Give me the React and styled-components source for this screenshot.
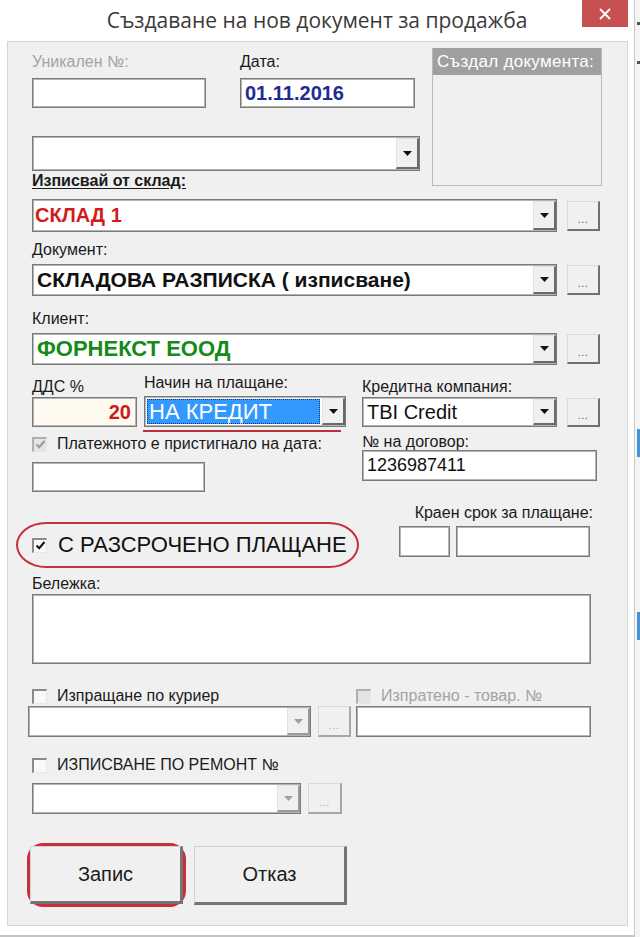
import React from 'react'
import styled, { createGlobalStyle } from 'styled-components'

const GlobalStyle = createGlobalStyle`
  html, body {
    margin: 0;
    padding: 0;
    background: #fff;
  }
  body {
    font-family: "Liberation Sans", Arial, sans-serif;
    color: #1a1a1a;
  }
  * {
    box-sizing: border-box;
  }
`

const Screen = styled.div`
  display: flex;
  width: 640px;
  height: 937px;
  overflow: hidden;
  background: #fff;
`

const Window = styled.div`
  flex: none;
  width: 635px;
  height: 937px;
  display: flex;
  flex-direction: column;
  background: #fff;
  border-right: 1px solid #c9c9c9;
  border-bottom: 2px solid #c4c4c4;
`

const OtherWindow = styled.div`
  flex: 1;
  display: flex;
  flex-direction: column;
  background: #f4f4f4;
`

const OtherMark = styled.div`
  margin-top: ${p => p.$mt}px;
  margin-left: 2px;
  width: 3px;
  height: ${p => p.$h}px;
  background: ${p => p.$color};
`

const TitleBar = styled.div`
  flex: none;
  height: 41px;
  display: grid;
  grid-template-columns: 52px 1fr 52px;
  align-items: start;
`

const Title = styled.div`
  grid-column: 2;
  padding-top: 7px;
  text-align: center;
  font-family: "Open Sans", "Noto Sans", sans-serif;
  font-size: 21px;
  line-height: 26px;
  color: #3a3a3a;
`

const CloseButton = styled.div`
  grid-column: 3;
  width: 46px;
  height: 27px;
  display: flex;
  align-items: center;
  justify-content: center;
  background: #c75050;
`

const Body = styled.div`
  padding-left: 7px;
`

const Panel = styled.div`
  width: 621px;
  height: 885px;
  padding: 6px 0 0 24px;
  background: #f0f0f0;
  border: 1px solid #d6d6d6;
  display: flex;
  flex-direction: column;
`

const Row = styled.div`
  display: flex;
  align-items: ${p => p.$align || 'center'};
  gap: ${p => p.$gap || 0}px;
  margin-top: ${p => p.$mt || 0}px;
  margin-left: ${p => p.$ml || 0}px;
`

const Column = styled.div`
  display: flex;
  flex-direction: column;
  flex: none;
  width: ${p => (p.$w ? `${p.$w}px` : 'auto')};
  margin-top: ${p => p.$mt || 0}px;
  margin-left: ${p => p.$ml || 0}px;
`

const Label = styled.div`
  margin-top: ${p => p.$mt || 0}px;
  font-size: 16px;
  line-height: ${p => p.$lh || 18}px;
  height: ${p => p.$lh || 18}px;
  white-space: nowrap;
  color: ${p => (p.$muted ? '#a3a3a3' : '#1a1a1a')};
  font-weight: ${p => (p.$bold ? 700 : 400)};
  text-decoration: ${p => (p.$underline ? 'underline' : 'none')};
  text-underline-offset: 2px;
  text-align: ${p => p.$align || 'left'};
`

const TextBox = styled.div`
  flex: none;
  width: ${p => p.$w}px;
  height: ${p => p.$h || 30}px;
  margin-top: ${p => p.$mt || 0}px;
  display: flex;
  align-items: center;
  justify-content: ${p => (p.$right ? 'flex-end' : 'flex-start')};
  padding: 0 5px 0 4px;
  background: ${p => p.$bg || '#fff'};
  border: 1px solid #7a7a7a;
  box-shadow: inset 0 0 0 1px #b4b4b4;
  font-size: ${p => p.$size || 20}px;
  white-space: nowrap;
  color: ${p => p.$color || '#111'};
  font-weight: ${p => (p.$bold ? 700 : 400)};
`

const Combo = styled.div`
  flex: none;
  width: ${p => p.$w}px;
  height: ${p => p.$h || 31}px;
  margin-top: ${p => p.$mt || 0}px;
  margin-left: ${p => p.$ml || 0}px;
  display: flex;
  align-items: stretch;
  background: #fff;
  border: 1px solid #7a7a7a;
  box-shadow: inset 0 0 0 1px #b4b4b4;
  padding: 1px 0 1px 1px;
`

const ComboText = styled.div`
  flex: 1;
  display: flex;
  align-items: center;
  padding-left: ${p => p.$pl ?? 3}px;
  font-size: ${p => p.$size || 20}px;
  white-space: nowrap;
  overflow: hidden;
  color: ${p => p.$color || '#111'};
  font-weight: ${p => (p.$bold ? 700 : 400)};
`

const Selection = styled.div`
  flex: 1;
  margin: 1px 2px 1px 1px;
  display: flex;
  align-items: center;
  padding-left: 2px;
  background: #3399ff;
  outline: 1px dotted #0c3c78;
  outline-offset: -1px;
  font-size: 22px;
  color: #fff;
  white-space: nowrap;
`

const ArrowButton = styled.div`
  flex: none;
  width: 23px;
  display: flex;
  align-items: center;
  justify-content: center;
  background: #f0f0f0;
  border-left: 1px solid #e2e2e2;
  border-top: 1px solid #e2e2e2;
  border-right: 2px solid ${p => (p.$disabled ? '#9a9a9a' : '#6a6a6a')};
  border-bottom: 2px solid ${p => (p.$disabled ? '#9a9a9a' : '#6a6a6a')};
`

const Dots = styled.div`
  flex: none;
  width: ${p => p.$w || 33}px;
  height: ${p => p.$h || 30}px;
  display: flex;
  align-items: flex-end;
  justify-content: center;
  padding-bottom: 6px;
  background: #f0f0f0;
  border-top: 1px solid #d8d8d8;
  border-left: 1px solid #d8d8d8;
  border-right: 2px solid ${p => (p.$disabled ? '#a6a6a6' : '#707070')};
  border-bottom: 2px solid ${p => (p.$disabled ? '#a6a6a6' : '#707070')};
  font-size: 11px;
  line-height: 8px;
  letter-spacing: 0.5px;
  color: ${p => (p.$disabled ? '#b0b0b0' : '#555')};
`

const InfoBox = styled.div`
  flex: none;
  width: 170px;
  height: 138px;
  margin-left: 12px;
  border: 1px solid #b9b9b9;
  border-top: none;
  background: #f0f0f0;
`

const InfoHeader = styled.div`
  height: 27px;
  padding-left: 4px;
  background: #a0a0a0;
  color: #fff;
  font-size: 17px;
  letter-spacing: 0.3px;
  line-height: 27px;
  white-space: nowrap;
`

const RedLine = styled.div`
  width: 198px;
  height: 2px;
  margin-top: 3px;
  margin-left: -1px;
  background: #b8323a;
`

const CheckRow = styled.div`
  display: flex;
  align-items: center;
  gap: ${p => p.$gap || 10}px;
  width: ${p => (p.$w ? `${p.$w}px` : 'auto')};
  height: 18px;
  margin-top: ${p => p.$mt || 0}px;
  font-size: ${p => p.$size || 16}px;
  white-space: nowrap;
  color: ${p => (p.$muted ? '#a3a3a3' : '#1a1a1a')};
`

const Box = styled.span`
  flex: none;
  width: 15px;
  height: 15px;
  display: inline-flex;
  align-items: center;
  justify-content: center;
  background: ${p => (p.$disabled ? '#e4e4e4' : '#f9f9f9')};
  border-top: 2px solid ${p => (p.$disabled ? '#b0b0b0' : '#8a8a8a')};
  border-left: 2px solid ${p => (p.$disabled ? '#b0b0b0' : '#8a8a8a')};
  border-right: 1px solid #e6e6e6;
  border-bottom: 1px solid #e6e6e6;
`

const Highlight = styled.div`
  flex: none;
  display: flex;
  align-items: center;
  width: ${p => p.$w}px;
  height: ${p => p.$h}px;
  margin-top: ${p => p.$mt || 0}px;
  margin-left: ${p => p.$ml || 0}px;
  padding-left: ${p => p.$pl || 0}px;
  border: ${p => p.$bw || 2}px solid #c5303b;
  border-radius: ${p => p.$radius};
`

const BigText = styled.span`
  margin-left: 11px;
  font-size: 22px;
  white-space: nowrap;
  color: #111;
`

const TextArea = styled.div`
  width: 559px;
  height: 70px;
  margin-top: 1px;
  background: #fff;
  border: 1px solid #7a7a7a;
  box-shadow: inset 0 0 0 1px #b4b4b4;
`

const Button = styled.div`
  flex: none;
  width: 153px;
  height: ${p => p.$h || 58}px;
  margin-top: ${p => p.$mt || 0}px;
  margin-left: ${p => p.$ml || 0}px;
  display: flex;
  align-items: center;
  justify-content: center;
  background: #f0f0f0;
  border-top: 1px solid #d2d2d2;
  border-left: 1px solid #d2d2d2;
  border-right: 3px solid #747474;
  border-bottom: 3px solid #747474;
  font-size: 20px;
  color: #1a1a1a;
`

const Arrow = ({ disabled }) => (
  <svg width="9" height="5" viewBox="0 0 9 5">
    <polygon points="0,0 9,0 4.5,5" fill={disabled ? '#a0a0a0' : '#111'} />
  </svg>
)

const Tick = ({ color = '#111' }) => (
  <svg width="11" height="11" viewBox="0 0 11 11">
    <path d="M1.5 5.5 L4.2 8.2 L9.5 2" fill="none" stroke={color} strokeWidth="2" />
  </svg>
)

const CheckBox = ({ checked, disabled }) => (
  <Box $disabled={disabled}>{checked && <Tick color={disabled ? '#9a9a9a' : '#111'} />}</Box>
)

const Select = ({ w, h, mt, ml, children, disabled }) => (
  <Combo $w={w} $h={h} $mt={mt} $ml={ml}>
    {children || <ComboText />}
    <ArrowButton $disabled={disabled}>
      <Arrow disabled={disabled} />
    </ArrowButton>
  </Combo>
)

export default function App() {
  return (
    <>
      <GlobalStyle />
      <Screen>
        <Window>
          <TitleBar>
            <Title>Създаване на нов документ за продажба</Title>
            <CloseButton>
              <svg width="12" height="12" viewBox="0 0 12 12">
                <path d="M1 1 L11 11 M11 1 L1 11" stroke="#fff" strokeWidth="1.8" />
              </svg>
            </CloseButton>
          </TitleBar>

          <Body>
            <Panel>
              <Row $align="flex-start">
                <Column $w={388}>
                  <Row $align="flex-start" $gap={34}>
                    <Column $w={174}>
                      <Label $mt={5} $muted>
                        Уникален №:
                      </Label>
                      <TextBox $w={174} $mt={7} />
                    </Column>
                    <Column $w={175}>
                      <Label $mt={5}>Дата:</Label>
                      <TextBox $w={175} $mt={7} $bold $color="#1f2a93">
                        01.11.2016
                      </TextBox>
                    </Column>
                  </Row>
                  <Select w={388} h={35} mt={28} />
                  <Label $mt={1} $bold $underline>
                    Изписвай от склад:
                  </Label>
                </Column>
                <InfoBox>
                  <InfoHeader>Създал документа:</InfoHeader>
                </InfoBox>
              </Row>

              <Row $mt={9} $gap={10}>
                <Select w={525} h={33}>
                  <ComboText $bold $pl={1} $color="#d21c1c">
                    СКЛАД 1
                  </ComboText>
                </Select>
                <Dots>...</Dots>
              </Row>

              <Label $mt={9}>Документ:</Label>
              <Row $mt={5} $gap={10}>
                <Select w={525} h={32}>
                  <ComboText $bold $size={21}>
                    СКЛАДОВА РАЗПИСКА ( изписване)
                  </ComboText>
                </Select>
                <Dots>...</Dots>
              </Row>

              <Label $mt={14}>Клиент:</Label>
              <Row $mt={5} $gap={10}>
                <Select w={525} h={32}>
                  <ComboText $bold $size={22} $color="#168a16">
                    ФОРНЕКСТ ЕООД
                  </ComboText>
                </Select>
                <Dots>...</Dots>
              </Row>

              <Row $mt={9} $align="flex-start">
                <Column $w={105}>
                  <Label $mt={4}>ДДС %</Label>
                  <TextBox $w={105} $mt={1} $bg="#fffaf0" $right $bold $color="#cc1a1a">
                    20
                  </TextBox>
                </Column>
                <Column $w={202} $ml={7}>
                  <Label>Начин на плащане:</Label>
                  <Select w={202} mt={4}>
                    <Selection>НА КРЕДИТ</Selection>
                  </Select>
                  <RedLine />
                </Column>
                <Column $ml={16}>
                  <Label $mt={4}>Кредитна компания:</Label>
                  <Row $mt={1} $gap={10}>
                    <Select w={195} h={30}>
                      <ComboText>TBI Credit</ComboText>
                    </Select>
                    <Dots $h={29}>...</Dots>
                  </Row>
                </Column>
              </Row>

              <Row $align="flex-start">
                <Column $w={330}>
                  <CheckRow $mt={3}>
                    <CheckBox checked disabled />
                    <span>Платежното е пристигнало на дата:</span>
                  </CheckRow>
                  <TextBox $w={173} $mt={9} />
                </Column>
                <Column>
                  <Label $mt={2} $lh={16}>
                    № на договор:
                  </Label>
                  <TextBox $w={235} $h={31} $size={18}>
                    1236987411
                  </TextBox>
                </Column>
              </Row>

              <Row $align="flex-start">
                <Highlight $w={343} $h={46} $mt={30} $ml={-16} $pl={14} $radius="30px / 23px">
                  <CheckBox checked />
                  <BigText>С РАЗСРОЧЕНО ПЛАЩАНЕ</BigText>
                </Highlight>
                <Column $w={194} $mt={12} $ml={40}>
                  <Label $align="right">Краен срок за плащане:</Label>
                  <Row $mt={4} $gap={6}>
                    <TextBox $w={51} $h={31} />
                    <TextBox $w={134} $h={31} />
                  </Row>
                </Column>
              </Row>

              <Label $mt={7}>Бележка:</Label>
              <TextArea />

              <Row $mt={23}>
                <CheckRow $w={324}>
                  <CheckBox />
                  <span>Изпращане по куриер</span>
                </CheckRow>
                <CheckRow $muted>
                  <CheckBox disabled />
                  <span>Изпратено - товар. №</span>
                </CheckRow>
              </Row>
              <Row $mt={1}>
                <Select w={283} ml={-4} disabled />
                <Row $ml={7}>
                  <Dots $h={31} $disabled>
                    ...
                  </Dots>
                </Row>
                <Row $ml={5}>
                  <TextBox $w={235} $h={31} />
                </Row>
              </Row>

              <CheckRow $mt={19}>
                <CheckBox />
                <span>ИЗПИСВАНЕ ПО РЕМОНТ №</span>
              </CheckRow>
              <Row $mt={9} $gap={7}>
                <Select w={269} disabled />
                <Dots $w={34} $h={31} $disabled>
                  ...
                </Dots>
              </Row>

              <Row $mt={29} $align="flex-start">
                <Highlight $w={159} $h={64} $ml={-5} $bw={3} $radius="16px">
                  <Button>Запис</Button>
                </Highlight>
                <Button $mt={3} $ml={8} $h={59}>
                  Отказ
                </Button>
              </Row>
            </Panel>
          </Body>
        </Window>
        <OtherWindow>
          <OtherMark $mt={22} $h={3} $color="#555" />
          <OtherMark $mt={36} $h={3} $color="#555" />
          <OtherMark $mt={365} $h={28} $color="#4a8fdc" />
          <OtherMark $mt={155} $h={28} $color="#4a8fdc" />
        </OtherWindow>
      </Screen>
    </>
  )
}
